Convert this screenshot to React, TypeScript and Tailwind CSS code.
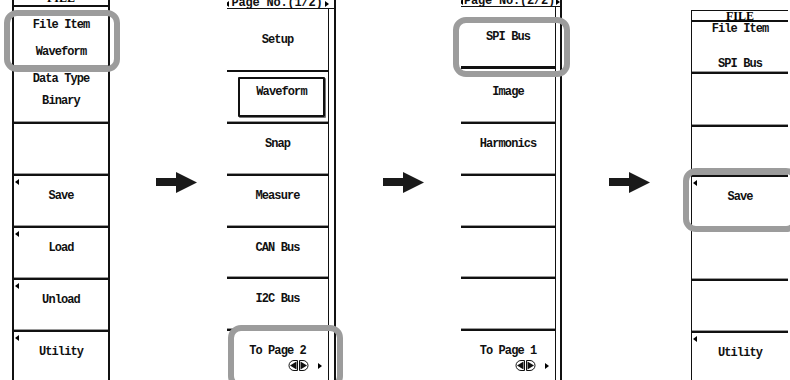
import React from 'react';

const mono = "font-['Liberation_Mono',monospace] font-bold text-[12px] leading-[12px] tracking-[-0.9px] text-[#111] whitespace-nowrap";

const Marker = () => (
    <span className="absolute left-[1px] top-[3px] w-0 h-0 border-y-[3.5px] border-y-transparent border-r-[4px] border-r-black" />
);

// one soft key of the menu column
const Key = ({ h, lines = [], marker = false, pt = 'pt-[14px]', gap = 'gap-[10px]', extra = '' }: {
    h: string; lines?: string[]; marker?: boolean; pt?: string; gap?: string; extra?: string;
}) => (
    <div className={`relative ${h} shrink-0 border-t-2 border-t-[#111] border-b border-b-[#9a9a9a] flex flex-col items-center ${pt} ${gap} ${extra}`}>
        {marker && <Marker />}
        {lines.map((l) => (
            <span key={l} className={mono}>{l}</span>
        ))}
    </div>
);

const Arrow = ({ ml }: { ml: string }) => (
    <svg className={`${ml} mt-[172px] shrink-0`} width="41" height="22" viewBox="0 0 41 22">
        <rect x="0" y="6" width="21" height="8" fill="#1a1a1a" />
        <polygon points="20,0 41,10.5 20,21" fill="#1a1a1a" />
    </svg>
);

const Jog = () => (
    <svg width="21" height="11" viewBox="0 0 21 11">
        <path d="M9.5 0.5 H6 A5 5 0 0 0 6 10.5 H9.5 Z" fill="none" stroke="#111" strokeWidth="1" />
        <path d="M11.5 0.5 H15 A5 5 0 0 1 15 10.5 H11.5 Z" fill="none" stroke="#111" strokeWidth="1" />
        <polygon points="2,5.5 8.5,1.5 8.5,9.5" fill="#111" />
        <polygon points="19,5.5 12.5,1.5 12.5,9.5" fill="#111" />
    </svg>
);

const PageHeader = ({ label, extra = '' }: { label: string; extra?: string }) => (
    <div className={`h-[9px] shrink-0 flex items-end overflow-hidden border-b border-b-[#111] ${extra}`}>
        <div className="w-[104px] -ml-[2px] flex items-center">
            <span className="w-0 h-0 border-y-[3.5px] border-y-transparent border-r-[4px] border-r-black" />
            <span className="flex-1 text-center font-['Liberation_Mono',monospace] font-bold text-[12px] leading-[9px] tracking-[-0.2px] text-[#111]">{label}</span>
            <span className="w-0 h-0 border-y-[3.5px] border-y-transparent border-l-[4px] border-l-black" />
        </div>
    </div>
);

const ToPage = ({ label }: { label: string }) => (
    <div className="relative h-[52px] shrink-0 border-t-2 border-t-[#111] flex flex-col items-center pt-[14px]">
        <span className={mono}>{label}</span>
        <div className="mt-[3px] w-full flex items-center justify-end pr-[6px] gap-[9px]">
            <Jog />
            <span className="w-0 h-0 border-y-[3.5px] border-y-transparent border-l-[4px] border-l-black" />
        </div>
    </div>
);

const Highlight = ({ pos }: { pos: string }) => (
    <div className={`absolute ${pos} border-[6px] border-[#9c9c9c] rounded-[13px] pointer-events-none`} />
);

export default function App() {
    return (
        <div className="relative w-[790px] h-[380px] overflow-hidden bg-white flex items-start">
            {/* FILE menu, step 1 */}
            <div className="ml-[12px] -mt-[9px] w-[98px] shrink-0 flex flex-col border-x-2 border-x-[#111]">
                <div className="h-[14px] flex items-center justify-center">
                    <span className="font-['Liberation_Serif',serif] font-bold text-[12px] leading-[12px]">FILE</span>
                </div>
                <Key h="h-[61px]" lines={['File Item', 'Waveform']} pt="pt-[12px]" gap="gap-[15px]" />
                <Key h="h-[56px]" lines={['Data Type', 'Binary']} pt="pt-[5px]" gap="gap-[10px]" />
                <Key h="h-[52px]" />
                <Key h="h-[52px]" lines={['Save']} marker />
                <Key h="h-[52px]" lines={['Load']} marker />
                <Key h="h-[52px]" lines={['Unload']} marker />
                <Key h="h-[52px]" lines={['Utility']} marker />
            </div>

            <Arrow ml="ml-[46px]" />

            {/* page 1 of the file item list */}
            <div className="ml-[30px] w-[109px] shrink-0 flex flex-col border-r-2 border-r-[#111]">
                <PageHeader label="Page No.(1/2)" />
                <div className="flex flex-col border-r border-r-[#111] mr-[5px]">
                    <div className="h-[61px] shrink-0 flex items-center justify-center">
                        <span className={mono}>Setup</span>
                    </div>
                    <div className="h-[52px] shrink-0 border-t-2 border-t-[#111] border-b border-b-[#9a9a9a] pl-[11px] pr-[3px] pt-[5px] pb-[4px]">
                        <div className="h-full border-2 border-[#111] rounded-[1px] shadow-[1px_1px_0_#777] flex justify-center pt-[7px]">
                            <span className={mono}>Waveform</span>
                        </div>
                    </div>
                    <Key h="h-[52px]" lines={['Snap']} />
                    <Key h="h-[52px]" lines={['Measure']} />
                    <Key h="h-[51px]" lines={['CAN Bus']} />
                    <Key h="h-[52px]" lines={['I2C Bus']} />
                    <ToPage label="To Page 2" />
                </div>
            </div>

            <Arrow ml="ml-[47px]" />

            {/* page 2 of the file item list */}
            <div className="ml-[37px] -mt-[3px] w-[101px] shrink-0 flex flex-col border-r-2 border-r-[#111]">
                <PageHeader label="Page No.(2/2)" extra="h-[10px]" />
                <div className="flex flex-col border-r border-r-[#111] mr-[4px]">
                    <div className="h-[60px] shrink-0 border-b border-b-[#111] flex items-center justify-center">
                        <span className={mono}>SPI Bus</span>
                    </div>
                    <Key h="h-[55px]" lines={['Image']} pt="pt-[17px]" />
                    <Key h="h-[52px]" lines={['Harmonics']} />
                    <Key h="h-[52px]" />
                    <Key h="h-[51px]" />
                    <Key h="h-[52px]" />
                    <ToPage label="To Page 1" />
                </div>
            </div>

            <Arrow ml="ml-[47px]" />

            {/* FILE menu, step 4 */}
            <div className="ml-[41px] mt-[10px] w-[97px] shrink-0 flex flex-col border-l border-l-[#111]">
                <div className="relative h-[10px] border-t border-t-[#111] flex items-center justify-center">
                    <span className="font-['Liberation_Serif',serif] font-bold text-[12px] leading-[10px] underline">FILE</span>
                </div>
                <div className="h-[52px] shrink-0 border-t-2 border-t-[#111] border-b border-b-[#9a9a9a] flex flex-col items-center pt-[1px] gap-[23px]">
                    <span className={mono}>File Item</span>
                    <span className={mono}>SPI Bus</span>
                </div>
                <Key h="h-[53px]" />
                <Key h="h-[50px]" />
                <Key h="h-[52px]" lines={['Save']} marker />
                <Key h="h-[52px]" />
                <Key h="h-[52px]" />
                <Key h="h-[52px]" lines={['Utility']} marker />
            </div>

            <Highlight pos="left-[4px] top-[10px] w-[116px] h-[62px]" />
            <Highlight pos="left-[228px] top-[325px] w-[115px] h-[64px]" />
            <Highlight pos="left-[453px] top-[17px] w-[117px] h-[60px]" />
            <Highlight pos="left-[683px] top-[168px] w-[116px] h-[64px]" />
        </div>
    );
}
